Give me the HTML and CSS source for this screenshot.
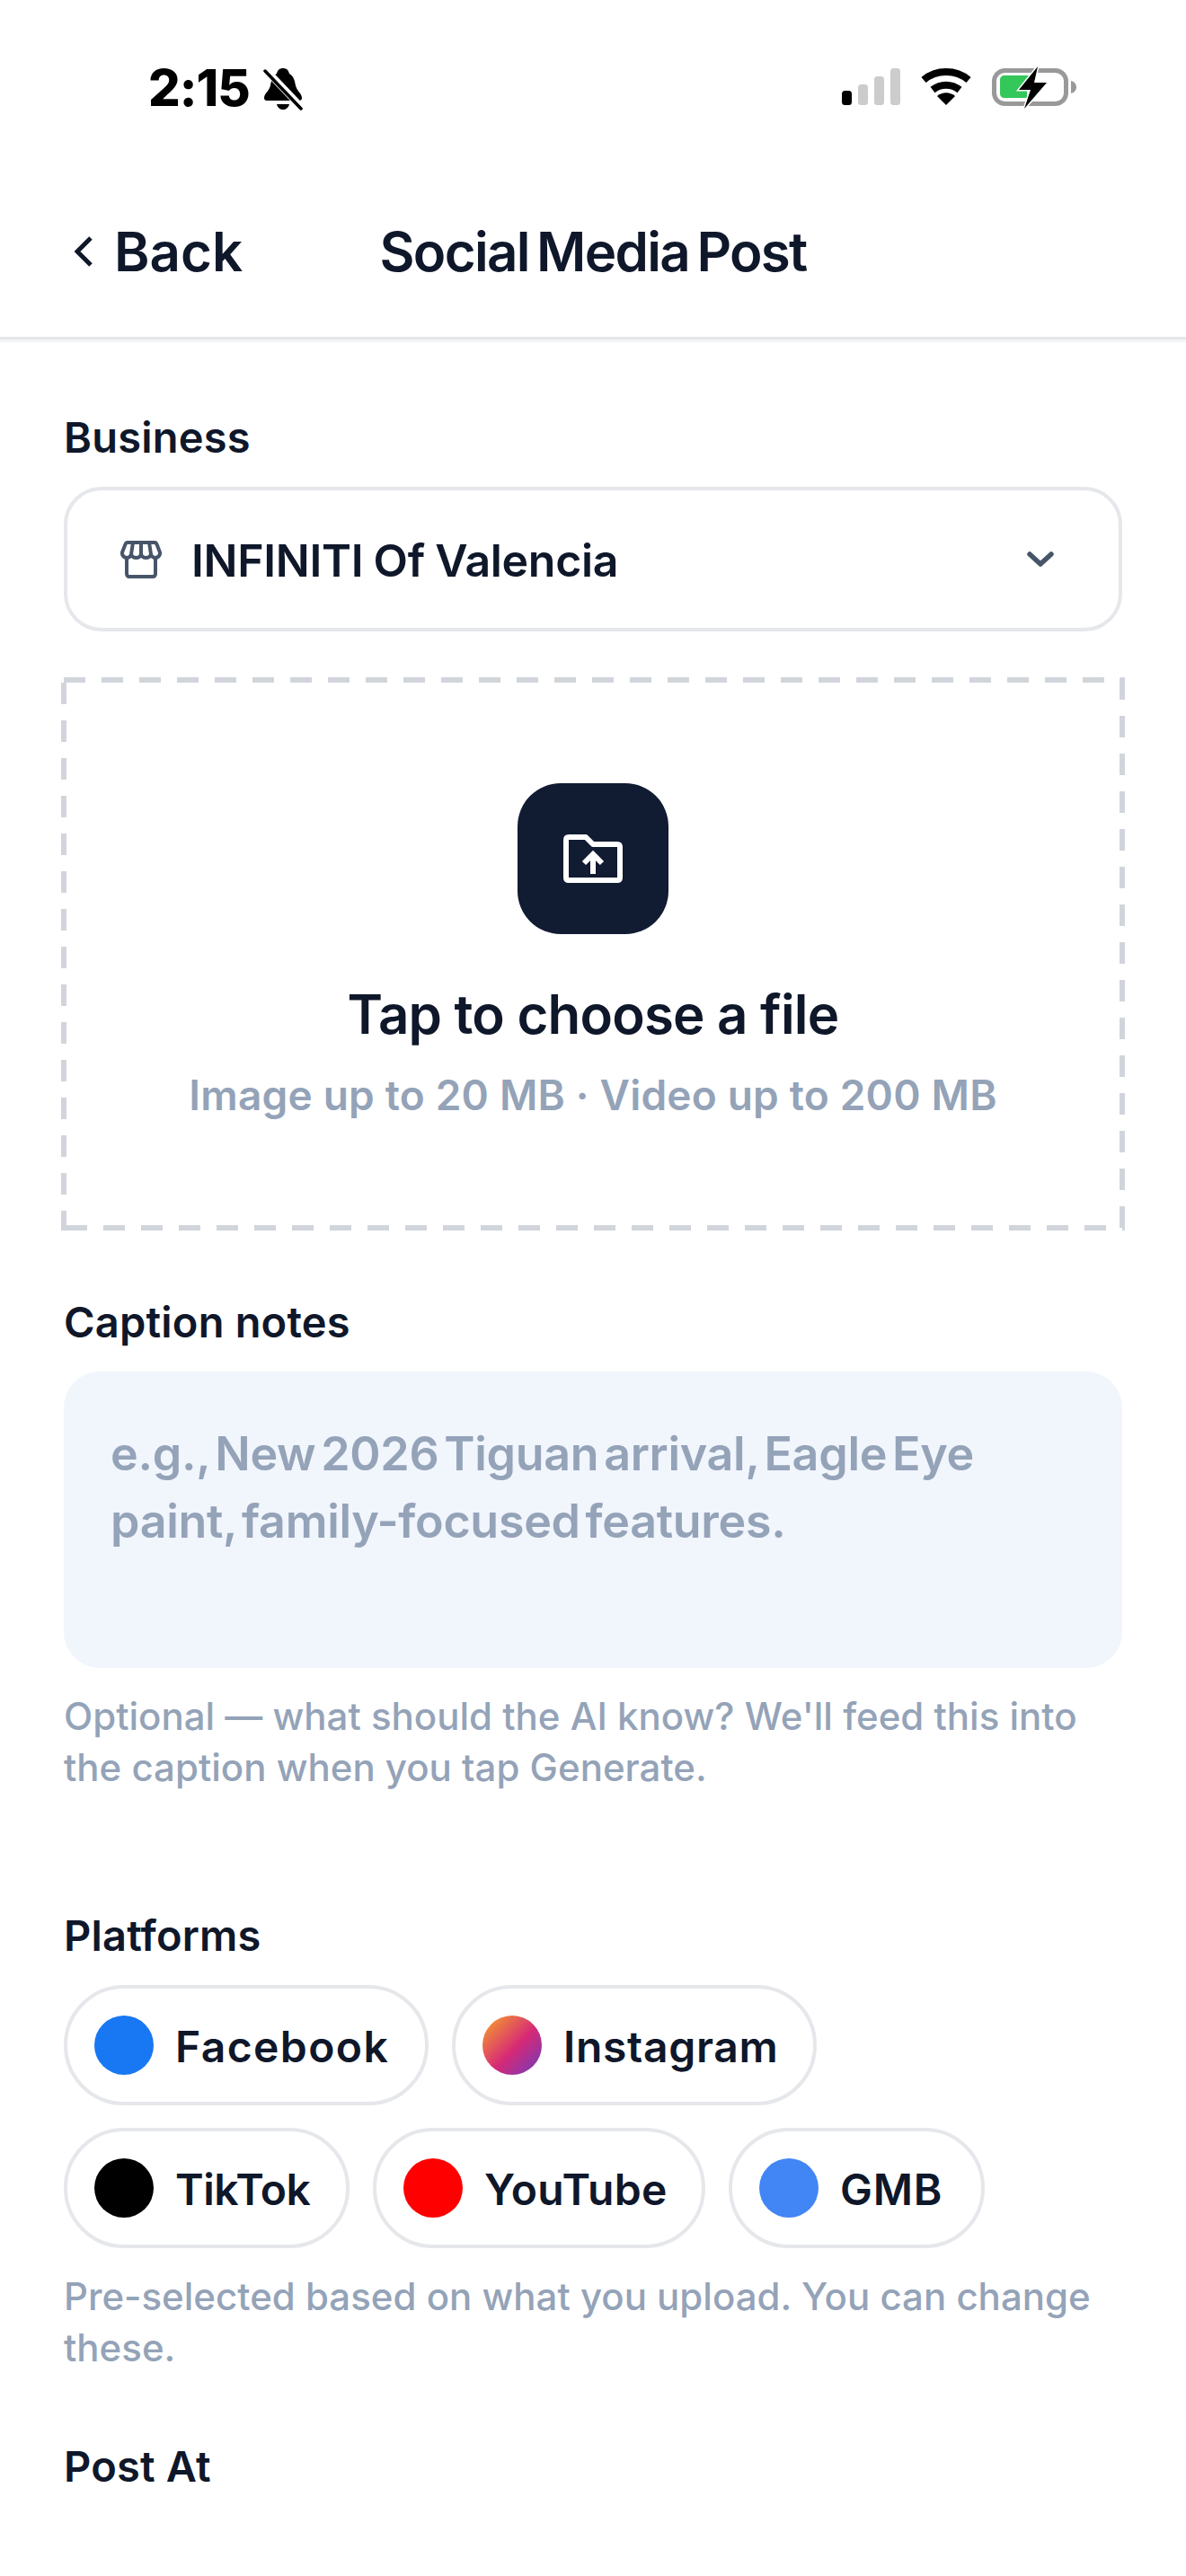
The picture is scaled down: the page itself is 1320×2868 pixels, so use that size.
FILE: index.html
```html
<!DOCTYPE html>
<html>
<head>
    <title>Social Media Post</title>
    <link rel="stylesheet" href="styles.css">
</head>
<body>
    <div class="status-bar">
        <div class="status-left">
            <span class="time">2:15</span>
            <svg class="bell" width="44" height="48" viewBox="0 0 44 48">
                <path d="M22 1c4 0 6 2 7 6 5 3 6 8 7 13 1 6 7 9 7 14 0 2-1 3-3 3H4c-2 0-3-1-3-3 0-5 6-8 7-14 1-5 2-10 7-13 1-4 3-6 7-6z" fill="#000"/>
                <path d="M15 41h14c-1 4-4 6-7 6s-6-2-7-6z" fill="#000"/>
                <path d="M3 3l40 42" stroke="#fff" stroke-width="8" fill="none"/>
                <path d="M2 4l40 42" stroke="#000" stroke-width="3.5" stroke-linecap="round" fill="none"/>
            </svg>
        </div>
        <div class="status-right">
            <svg class="signal" width="65" height="41" viewBox="0 0 65 41">
                <rect x="0" y="25" width="11" height="16" rx="3.5" fill="#000"/>
                <rect x="18" y="18" width="11" height="23" rx="3.5" fill="#ccc"/>
                <rect x="36" y="9" width="11" height="32" rx="3.5" fill="#ccc"/>
                <rect x="54" y="0" width="11" height="41" rx="3.5" fill="#ccc"/>
            </svg>
            <svg class="wifi" width="58" height="42" viewBox="0 0 58 42">
                <path d="M4 14C18 2 40 2 54 14" stroke="#000" stroke-width="8" fill="none"/>
                <path d="M14 25c9-7 21-7 30 0" stroke="#000" stroke-width="8" fill="none"/>
                <path d="M19 32c6-5 14-5 20 0L29 42z" fill="#000"/>
            </svg>
            <svg class="battery" width="94" height="48" viewBox="0 0 94 48">
                <rect x="2.5" y="5.5" width="80" height="37" rx="12" fill="#fff" stroke="#999" stroke-width="5"/>
                <path d="M88 17c4 1 6 4 6 7s-2 6-6 7z" fill="#999"/>
                <path d="M14 11h31l-12 13h6v12H14c-3 0-5-2-5-5V16c0-3 2-5 5-5z" fill="#34c759"/>
                <path d="M51 1L30 27h13l-7 21 25-29H47z" fill="#000" stroke="#fff" stroke-width="3" paint-order="stroke"/>
            </svg>
        </div>
    </div>

    <div class="nav-bar">
        <div class="back">
            <svg width="20" height="34" viewBox="0 0 20 34">
                <path d="M18 2L3 17l15 15" stroke="#0f172a" stroke-width="5" fill="none"/>
            </svg>
            <span>Back</span>
        </div>
        <h1>Social Media Post</h1>
    </div>

    <div class="content">
        <label class="field-label">Business</label>
        <div class="select-box">
            <svg class="store-icon" width="46" height="42" viewBox="0 0 46 42">
                <path d="M8 2h30c1 0 2 .5 2.500 2L44 13c.5 3-2 6-5 6-2.500 0-4-1-5-3.500-1 2.500-3 3.500-5.500 3.500S24 18 23 15.500C22 18 20 19 17.500 19S13 18 12 15.500C11 18 9.500 19 7 19c-3 0-5.500-3-5-6L5.500 4C6 2.500 7 2 8 2z" stroke="#475569" stroke-width="4" stroke-linejoin="round" fill="none"/>
                <path d="M7 19v18c0 1.500 1 3 3 3h26c2 0 3-1.500 3-3V19M12 15l2-13M23 15V2M34 15L32 2" stroke="#475569" stroke-width="4" stroke-linejoin="round" fill="none"/>
            </svg>
            <span class="select-text">INFINITI Of Valencia</span>
            <svg class="select-arrow" width="30" height="18" viewBox="0 0 30 18">
                <path d="M3 3l12 11L27 3" stroke="#475569" stroke-width="5.500" stroke-linecap="round" stroke-linejoin="round" fill="none"/>
            </svg>
        </div>

        <div class="upload-box">
            <div class="upload-icon">
                <svg width="66" height="54" viewBox="0 0 66 54">
                    <path d="M6 3h19l8 8h27c2 0 3 1 3 3v34c0 2-1 3-3 3H6c-2 0-3-1-3-3V6c0-2 1-3 3-3z" stroke="#fff" stroke-width="6" stroke-linejoin="round" fill="none"/>
                    <path d="M33 44V23M23 32l10-10 10 10" stroke="#fff" stroke-width="6" fill="none"/>
                </svg>
            </div>
            <div class="upload-title">Tap to choose a file</div>
            <div class="upload-sub">Image up to 20 MB · Video up to 200 MB</div>
        </div>

        <label class="field-label caption-label">Caption notes</label>
        <div class="caption-input">e.g., New 2026 Tiguan arrival, Eagle Eye<br>paint, family-focused features.</div>
        <p class="help-text">Optional — what should the AI know? We'll feed this into<br>the caption when you tap Generate.</p>

        <label class="field-label platforms-label">Platforms</label>
        <div class="chips">
            <div class="chip chip-facebook"><span class="dot dot-facebook"></span><span class="chip-name">Facebook</span></div>
            <div class="chip chip-instagram"><span class="dot dot-instagram"></span><span class="chip-name">Instagram</span></div>
            <div class="chip chip-tiktok"><span class="dot dot-tiktok"></span><span class="chip-name">TikTok</span></div>
            <div class="chip chip-youtube"><span class="dot dot-youtube"></span><span class="chip-name">YouTube</span></div>
            <div class="chip chip-gmb"><span class="dot dot-gmb"></span><span class="chip-name">GMB</span></div>
        </div>
        <p class="help-text platforms-help">Pre-selected based on what you upload. You can change<br>these.</p>

        <label class="field-label post-label">Post At</label>
    </div>
</body>
</html>
```

FILE: styles.css
```css
body, h1, p {
    margin: 0;
    padding: 0;
}

body {
    background-color: #fff;
    color: #0f172a;
    font-family: Inter, "Noto Sans", sans-serif;
}

.status-bar {
    display: flex;
    justify-content: space-between;
    height: 150px;
    padding: 73px 122px 0 165px;
    box-sizing: border-box;
}

.status-left {
    display: flex;
    align-items: flex-start;
    gap: 15px;
}

.time {
    font-size: 56px;
    font-weight: 800;
    line-height: 50px;
    color: #000;
    letter-spacing: -1px;
}

.bell {
    margin-top: 2px;
}

.status-right {
    display: flex;
    align-items: flex-start;
    height: 48px;
}

.signal {
    margin-top: 3px;
}

.wifi {
    margin: 2px 0 0 22px;
}

.battery {
    margin-left: 22px;
}

.nav-bar {
    display: grid;
    grid-template-columns: 1fr auto 1fr;
    align-items: center;
    height: 228px;
    padding-top: 34px;
    box-sizing: border-box;
    border-bottom: 3px solid #e5e7eb;
    box-shadow: 0 3px 0 #f3f4f6;
}

.back {
    display: flex;
    align-items: center;
    gap: 24px;
    padding-left: 83px;
    font-size: 60px;
    font-weight: 600;
    line-height: 70px;
}

.nav-bar h1 {
    font-size: 60px;
    font-weight: 600;
    line-height: 70px;
    letter-spacing: -1.700px;
    word-spacing: -5px;
}

.content {
    padding: 79px 71px 0;
}

.field-label {
    display: block;
    font-size: 47px;
    font-weight: 600;
    line-height: 60px;
    letter-spacing: 0.200px;
    margin-bottom: 25px;
}

.select-box {
    display: flex;
    align-items: center;
    height: 161px;
    box-sizing: border-box;
    padding: 0 72px 0 59px;
    border: 4px solid #e5e7eb;
    border-radius: 42px;
}

.select-text {
    flex: 1;
    margin-left: 33px;
    padding-top: 2px;
    font-size: 50px;
    font-weight: 600;
    letter-spacing: -0.300px;
    word-spacing: -1px;
}

.upload-box {
    display: flex;
    flex-direction: column;
    align-items: center;
    height: 616px;
    box-sizing: border-box;
    margin: 51px -3px 0;
    padding-top: 118px;
    background-image:
        linear-gradient(to right, #d1d5db 24px, transparent 24px),
        linear-gradient(to right, #d1d5db 24px, transparent 24px),
        linear-gradient(to bottom, #d1d5db 24px, transparent 24px),
        linear-gradient(to bottom, #d1d5db 24px, transparent 24px);
    background-size: 42px 6px, 42px 6px, 6px 42px, 6px 42px;
    background-repeat: repeat-x, repeat-x, repeat-y, repeat-y;
    background-position: 3px 0, 5px 100%, 0 6px, 100% 1px;
}

.upload-icon {
    display: flex;
    justify-content: center;
    align-items: center;
    width: 168px;
    height: 168px;
    border-radius: 48px;
    background-color: #111b32;
}

.upload-title {
    margin-top: 53px;
    font-size: 60px;
    font-weight: 600;
    line-height: 72px;
    letter-spacing: -0.800px;
}

.upload-sub {
    margin-top: 26px;
    font-size: 46px;
    font-weight: 600;
    line-height: 56px;
    letter-spacing: 0.200px;
    color: #94a3b8;
}

.caption-label {
    margin-top: 72px;
}

.caption-input {
    height: 330px;
    box-sizing: border-box;
    padding: 54px 52px 0;
    border-radius: 40px;
    background-color: #f1f5fc;
    color: #94a3b8;
    font-size: 52px;
    font-weight: 600;
    line-height: 75px;
    letter-spacing: -0.300px;
    word-spacing: -7px;
}

.help-text {
    margin-top: 25px;
    font-size: 42px;
    font-weight: 500;
    line-height: 57px;
    color: #94a3b8;
}

.platforms-label {
    margin-top: 129px;
}

.chips {
    display: flex;
    flex-wrap: wrap;
    gap: 25px 26px;
}

.chip {
    display: flex;
    align-items: center;
    gap: 24px;
    height: 134px;
    box-sizing: border-box;
    padding: 0 30px;
    border: 4px solid #e5e7eb;
    border-radius: 67px;
    font-size: 48px;
    font-weight: 600;
    line-height: 60px;
    letter-spacing: 0.300px;
}

.chip-name {
    padding-top: 4px;
}

.chip-facebook {
    width: 406px;
    letter-spacing: 1.400px;
}

.chip-instagram {
    width: 406px;
    letter-spacing: 0.700px;
}

.chip-tiktok {
    width: 318px;
    letter-spacing: -0.500px;
}

.chip-youtube {
    width: 370px;
}

.chip-gmb {
    width: 285px;
    letter-spacing: 0.800px;
}

.dot {
    flex: none;
    width: 66px;
    height: 66px;
    border-radius: 50%;
}

.dot-facebook {
    background-color: #1877f2;
}

.dot-instagram {
    background: linear-gradient(135deg, #f9a825, #d62976 55%, #6a3cc0);
}

.dot-tiktok {
    background-color: #000;
}

.dot-youtube {
    background-color: #f00;
}

.dot-gmb {
    background-color: #4285f4;
}

.platforms-help {
    margin-top: 25px;
}

.post-label {
    margin-top: 74px;
}
```
